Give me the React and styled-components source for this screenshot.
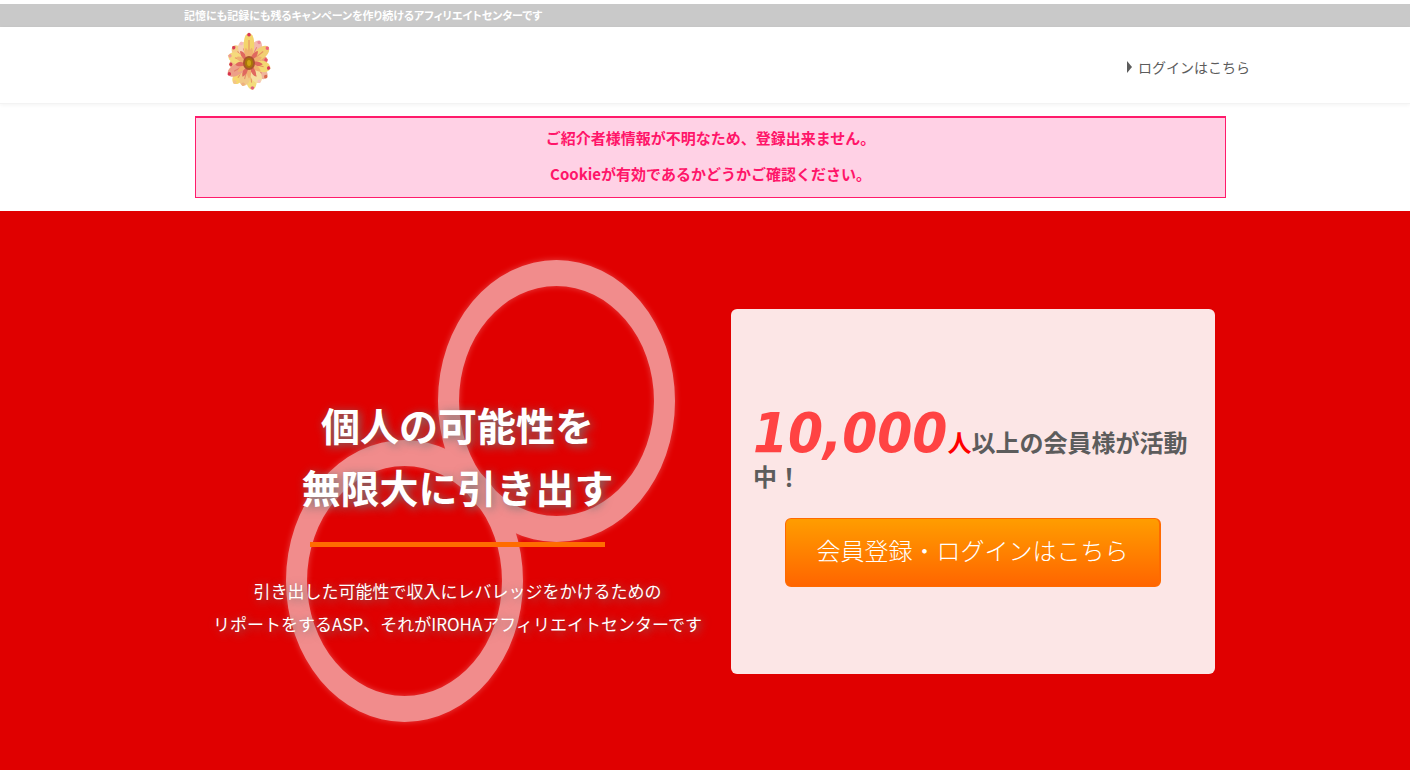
import React from 'react';
import styled, { createGlobalStyle } from 'styled-components';

const GlobalStyle = createGlobalStyle`
  * {
    box-sizing: border-box;
  }

  body {
    margin: 0;
    background: #fff;
    color: #5c5c5c;
    font-family: "Noto Sans CJK JP", sans-serif;
  }

  h1, h2, p {
    margin: 0;
  }
`;

const TopBar = styled.div`
  margin-top: 4px;
  background: #c9c9c9;
  color: #fff;
`;

const Container = styled.div`
  width: 100%;
  max-width: 1042px;
  margin: 0 auto;
`;

const Tagline = styled.p`
  font-size: 11px;
  font-weight: bold;
  line-height: 23px;
  font-feature-settings: "palt";
`;

const Header = styled.header`
  border-bottom: 1px solid #f3f3f3;
  box-shadow: 0 1px 4px rgba(0, 0, 0, 0.05);
`;

const HeaderInner = styled.div`
  display: flex;
  align-items: center;
  justify-content: space-between;
  max-width: 1090px;
  height: 76px;
  margin: 0 auto;
  padding: 0 0 8px 66px;
`;

const LogoLink = styled.a`
  display: block;
  height: 62px;
`;

const LoginLink = styled.a`
  display: flex;
  align-items: center;
  gap: 6px;
  padding-top: 12px;
  color: #5c5c5c;
  font-size: 14px;
  line-height: 24px;
  text-decoration: none;

  &::before {
    content: "";
    border-left: 5px solid #5c5c5c;
    border-top: 6px solid transparent;
    border-bottom: 6px solid transparent;
  }
`;

const Alert = styled.div`
  margin: 12px 0 13px 11px;
  padding: 2px 0 5px;
  border: 1px solid #ff1b6b;
  border-top-width: 2px;
  background: #ffd1e5;
  color: #ff1569;
  font-size: 15px;
  font-weight: bold;
  line-height: 36px;
  text-align: center;
`;

const Hero = styled.section`
  padding: 38px 0 37px;
  background: #e00000;
`;

const HeroInner = styled(Container)`
  display: grid;
  grid-template-columns: 525fr 484fr;
  gap: 11px;
  align-items: center;
  padding: 0 11px;
`;

const Lead = styled.div`
  position: relative;
  min-height: 484px;
  padding-top: 144px;
  color: #fff;
  text-align: center;
`;

const Rings = styled.svg`
  position: absolute;
  top: 0;
  left: 80px;
`;

const LeadText = styled.div`
  position: relative;
`;

const Headline = styled.h1`
  font-size: 39px;
  font-weight: bold;
  line-height: 62px;
  text-shadow: 2px 2px 10px #777;
`;

const Rule = styled.hr`
  width: 295px;
  height: 5px;
  margin: 25px auto 27px;
  border: 0;
  background: #ff6c00;
`;

const Description = styled.p`
  font-size: 17px;
  line-height: 33px;
  white-space: nowrap;
  text-shadow: 2px 2px 10px #777;
`;

const Card = styled.div`
  padding: 98px 22px 87px;
  border-radius: 6px;
  background: #fce6e6;
`;

const Members = styled.h2`
  font-size: 24px;
  font-weight: bold;
  line-height: 34px;
`;

const Count = styled.em`
  color: #ff4343;
  font-family: "DejaVu Sans Condensed", "DejaVu Sans", sans-serif;
  font-size: 56px;
  line-height: 52px;
`;

const Unit = styled.span`
  color: #f00;
`;

const JoinButton = styled.button`
  display: block;
  width: 376px;
  max-width: 100%;
  height: 69px;
  margin: 25px auto 0;
  padding: 0 0 6px;
  border: 1px solid #ff6a00;
  border-right-width: 2px;
  border-radius: 6px;
  background: linear-gradient(#ff9d00, #ff6500);
  color: #fff;
  font-family: inherit;
  font-size: 24px;
  font-weight: 300;
  cursor: pointer;
`;

const OUTER_PETALS = [
  [27, 24, '#f4b9ae', '#ee8a98'],
  [80, 19, '#eda079', '#e8506c'],
  [128, 23, '#efb59c', '#d9694f'],
  [172, 26, '#f3dc7a', '#e2607a'],
  [218, 25, '#f6d76e', '#f3c48a'],
  [266, 20, '#f0bd83', '#d23a52'],
  [314, 23, '#f5cf86', '#d73b53'],
  [338, 22, '#f6d0b4', '#f5b8bc'],
  [0, 29, '#f3d56c', '#d8345a'],
  [52, 25, '#f2cf72', '#ee5f7c'],
  [104, 22, '#f3d872', '#d83a58'],
  [150, 22, '#f6dfa0', '#f6c6c0'],
  [196, 23, '#f2c987', '#efb080'],
  [242, 24, '#eda088', '#d8324e'],
  [290, 22, '#f5da7c', '#ee9a96'],
];

const INNER_PETALS = [12, 40, 68, 95, 122, 150, 180, 208, 236, 264, 292, 320, 346];

const FlowerLogo = () => (
  <svg width="46" height="62" viewBox="-23 -33 46 62" role="img" aria-label="IROHA">
    {OUTER_PETALS.map(([angle, length, fill, tip]) => (
      <g key={angle} transform={`scale(1 1.04) rotate(${angle})`}>
        <path d={`M0 0C-6 -7 -8 ${2 - length} 0 ${-length}C8 ${2 - length} 6 -7 0 0Z`} fill={fill} />
        <path d={`M-2 ${2 - length}Q0 ${-length - 2} 2 ${2 - length}Q0 ${5 - length} -2 ${2 - length}Z`} fill={tip} />
        <path d={`M0 -6V${7 - length}`} stroke="#e0705e" strokeOpacity="0.7" strokeWidth="1" />
      </g>
    ))}
    {INNER_PETALS.map((angle, i) => (
      <path
        key={angle}
        transform={`scale(.92 1.04) rotate(${angle})`}
        d="M0 0C-3 -6 -3 -12 0 -15C3 -12 3 -6 0 0Z"
        fill={i % 2 ? '#e0685f' : '#f0b070'}
      />
    ))}
    <ellipse rx="6" ry="7" fill="#a8552c" />
    <ellipse rx="4" ry="5" fill="#a97809" />
    <ellipse rx="2" ry="3" fill="#d0a414" />
  </svg>
);

const RingMark = () => (
  <Rings width="411" height="484" viewBox="0 0 411 484" aria-hidden="true">
    <defs>
      <filter id="glow" x="-5%" y="-5%" width="110%" height="110%">
        <feGaussianBlur stdDeviation="3" result="blur" />
        <feComponentTransfer in="blur" result="halo">
          <feFuncA type="linear" slope="0.5" />
        </feComponentTransfer>
        <feMerge>
          <feMergeNode in="halo" />
          <feMergeNode in="SourceGraphic" />
        </feMerge>
      </filter>
    </defs>
    <g fill="#fff" fillRule="evenodd" opacity="0.55" filter="url(#glow)">
      <path d="M163 152a118.500 141 0 1 1 237 0a118.500 141 0 1 1 -237 0ZM184 152a97.500 115 0 1 0 195 0a97.500 115 0 1 0 -195 0Z" />
      <path d="M11 332a118.500 141 0 1 1 237 0a118.500 141 0 1 1 -237 0ZM32 332a97.500 115 0 1 0 195 0a97.500 115 0 1 0 -195 0Z" />
    </g>
  </Rings>
);

const App = () => (
  <>
    <GlobalStyle />
    <TopBar>
      <Container>
        <Tagline>記憶にも記録にも残るキャンペーンを作り続けるアフィリエイトセンターです</Tagline>
      </Container>
    </TopBar>
    <Header>
      <HeaderInner>
        <LogoLink href="#"><FlowerLogo /></LogoLink>
        <LoginLink href="#login">ログインはこちら</LoginLink>
      </HeaderInner>
    </Header>
    <Container>
      <Alert role="alert">
        <p>ご紹介者様情報が不明なため、登録出来ません。</p>
        <p>Cookieが有効であるかどうかご確認ください。</p>
      </Alert>
    </Container>
    <Hero>
      <HeroInner>
        <Lead>
          <RingMark />
          <LeadText>
            <Headline>個人の可能性を<br />無限大に引き出す</Headline>
            <Rule />
            <Description>
              引き出した可能性で収入にレバレッジをかけるための<br />
              リポートをするASP、それがIROHAアフィリエイトセンターです
            </Description>
          </LeadText>
        </Lead>
        <Card>
          <Members>
            <Count>10,000</Count><Unit>人</Unit>以上の会員様が活動中！
          </Members>
          <JoinButton type="button">会員登録・ログインはこちら</JoinButton>
        </Card>
      </HeroInner>
    </Hero>
  </>
);

export default App;
